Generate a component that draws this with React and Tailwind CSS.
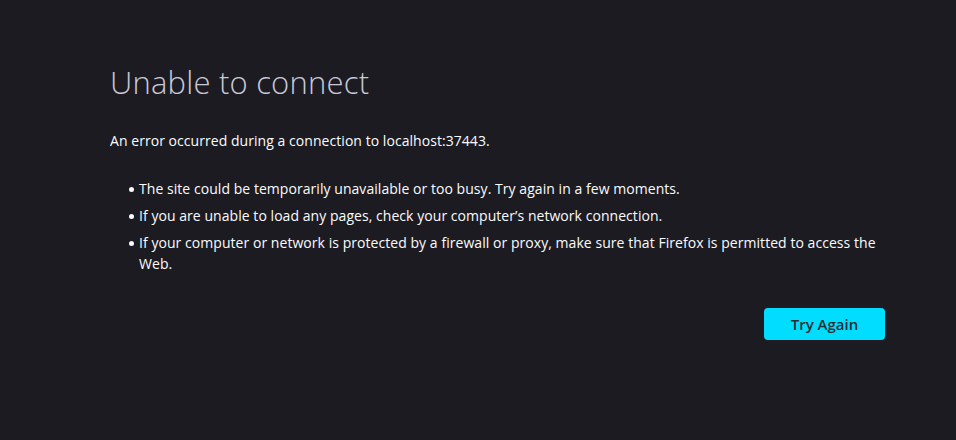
import React from 'react';

const items = [
    "The site could be temporarily unavailable or too busy. Try again in a few moments.",
    "If you are unable to load any pages, check your computer\u2019s network connection.",
    "If your computer or network is protected by a firewall or proxy, make sure that Firefox is permitted to access the Web.",
];

export default function App() {
    return (
        <div className="min-h-[440px] w-full bg-[#1c1b22] text-[#fbfbfe] font-['Open_Sans',sans-serif]">
            <div className="ml-[110px] w-[776px] pt-[62px]">
                {/* Title */}
                <h1 className="text-[31px] font-light leading-[40px] text-[#c8c9d6] tracking-[0.2px]">Unable to connect</h1>

                <p className="mt-[28px] text-[14px] leading-[21px] tracking-[0.05px]">
                    An error occurred during a connection to localhost:37443.
                </p>

                {/* Suggestions */}
                <ul className="mt-[27px] ml-[29px] space-y-[6px] text-[14px] leading-[21px] tracking-[0.05px]">
                    {items.map((text, i) => (
                        <li key={i} className="relative">
                            <span className="absolute left-[-10px] top-[9px] w-[5px] h-[5px] rounded-full bg-[#fbfbfe]" />
                            {text}
                        </li>
                    ))}
                </ul>

                <div className="mt-[34px] flex justify-end pr-[1px]">
                    <button className="w-[121px] h-[32px] rounded-[4px] bg-[#00ddff] text-[#2b2a33] text-[15px] font-semibold">
                        Try Again
                    </button>
                </div>
            </div>
        </div>
    );
}
